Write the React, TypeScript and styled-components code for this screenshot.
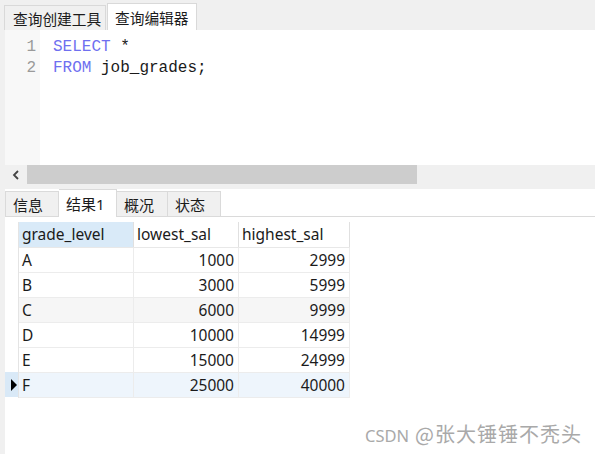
import styled, { createGlobalStyle } from 'styled-components'

const GlobalStyle = createGlobalStyle`
  html, body {
    margin: 0;
    padding: 0;
    background: #f0f0f0;
  }
  body {
    font-family: "Noto Sans", "Noto Sans CJK SC", sans-serif;
    color: #1b1b1b;
  }
`

const Page = styled.div`
  position: relative;
  width: 595px;
  height: 454px;
  overflow: hidden;
  background: #f0f0f0;
  display: flex;
  flex-direction: column;
`

const TopTabs = styled.div`
  height: 30px;
  display: flex;
  align-items: flex-end;
  padding-left: 4px;
  background: #f0f0f0;
`

const TopTab = styled.div<{ $active?: boolean; $w: number }>`
  width: ${p => p.$w}px;
  height: ${p => (p.$active ? 27 : 25)}px;
  box-sizing: border-box;
  padding-left: ${p => (p.$active ? 7 : 8)}px;
  display: flex;
  align-items: center;
  font-size: 14.7px;
  font-family: "Noto Sans CJK SC", sans-serif;
  white-space: nowrap;
  background: ${p => (p.$active ? '#ffffff' : '#f0f0f0')};
  border: 1px solid #d9d9d9;
  border-bottom: none;
  margin-left: ${p => (p.$active ? 1 : 0)}px;
`

const Body = styled.div`
  flex: 1;
  margin-left: 5px;
  background: #ffffff;
  display: flex;
  flex-direction: column;
`

const Editor = styled.div`
  height: 135px;
  display: flex;
  font-family: "Liberation Mono", monospace;
  font-size: 16px;
  line-height: 21px;
`

const Gutter = styled.div`
  width: 35px;
  box-sizing: border-box;
  padding: 7px 4px 0 0;
  background: #f8f8f8;
  color: #9a9a9a;
  text-align: right;
`

const Code = styled.div`
  padding: 7px 0 0 13px;
  color: #1a1a1a;
  white-space: pre;
`

const Keyword = styled.span`
  color: #6f6ff0;
`

const ScrollBar = styled.div`
  height: 24px;
  background: #f0f0f0;
  display: flex;
  align-items: flex-start;
`

const ArrowButton = styled.div`
  width: 22px;
  height: 19px;
  display: flex;
  align-items: center;
  justify-content: center;
`

const Thumb = styled.div`
  width: 390px;
  height: 19px;
  background: #cdcdcd;
`

const ResultTabs = styled.div`
  height: 27px;
  display: flex;
  align-items: flex-end;
  border-bottom: 1px solid #dadada;
`

const ResultTab = styled.div<{ $active?: boolean; $first?: boolean; $w: number }>`
  width: ${p => p.$w}px;
  height: ${p => (p.$active ? 28 : 25)}px;
  box-sizing: border-box;
  padding-left: 7px;
  display: flex;
  align-items: center;
  font-size: 15px;
  font-family: "Noto Sans", "Noto Sans CJK SC", sans-serif;
  background: ${p => (p.$active ? '#ffffff' : '#f0f0f0')};
  border: 1px solid #dadada;
  border-bottom: none;
  margin-bottom: ${p => (p.$active ? -1 : 0)}px;
  border-left: ${p => (p.$first ? '1px solid #dadada' : 'none')};
`

const GridWrap = styled.div`
  padding-top: 5px;
`

const Grid = styled.table`
  border-collapse: collapse;
  table-layout: fixed;
  font-size: 15.5px;
  font-family: "Noto Sans", "Noto Sans CJK SC", sans-serif;
`

const IndicatorCell = styled.td<{ $current?: boolean }>`
  width: 13px;
  padding: 0;
  height: 25px;
  background: ${p => (p.$current ? '#d9e9f7' : '#ffffff')};
  border-right: 1px solid #e4e4e4;
  position: relative;
`

const HeadCell = styled.th<{ $selected?: boolean; $w: number }>`
  width: ${p => p.$w}px;
  height: 25px;
  box-sizing: border-box;
  padding: 0 3px;
  text-align: left;
  font-weight: 400;
  background: ${p => (p.$selected ? '#d9eaf8' : '#ffffff')};
  border-right: 1px solid #e0e0e0;
  border-bottom: 1px solid #e8e8e8;
`

const Row = styled.tr<{ $tone: 'plain' | 'alt' | 'current' }>`
  background: ${p => (p.$tone === 'alt' ? '#f6f6f6' : p.$tone === 'current' ? '#eef5fc' : '#ffffff')};
`

const Cell = styled.td<{ $num?: boolean }>`
  height: 25px;
  box-sizing: border-box;
  padding: 0 ${p => (p.$num ? 4 : 3)}px 0 3px;
  text-align: ${p => (p.$num ? 'right' : 'left')};
  border-right: 1px solid #ececec;
  border-bottom: 1px solid #ececec;
  white-space: nowrap;
`

const Pointer = styled.span`
  position: absolute;
  left: 6px;
  top: 7px;
  width: 0;
  height: 0;
  border-top: 6px solid transparent;
  border-bottom: 6px solid transparent;
  border-left: 6px solid #000;
`

const Watermark = styled.div`
  position: absolute;
  right: 13px;
  bottom: 6px;
  color: #a9a9a9;
  display: flex;
  align-items: baseline;
  gap: 6px;
  font-family: "Noto Sans CJK SC", sans-serif;
`

const MarkLatin = styled.span`
  font-family: "Noto Sans", sans-serif;
  font-size: 16.5px;
`

const MarkName = styled.span`
  font-size: 20px;
  letter-spacing: 1px;
`

const rows = [
  { g: 'A', lo: 1000, hi: 2999 },
  { g: 'B', lo: 3000, hi: 5999 },
  { g: 'C', lo: 6000, hi: 9999 },
  { g: 'D', lo: 10000, hi: 14999 },
  { g: 'E', lo: 15000, hi: 24999 },
  { g: 'F', lo: 25000, hi: 40000 },
]

const App = () => {
  return (
    <Page>
      <GlobalStyle />
      <TopTabs>
        <TopTab $w={102}>查询创建工具</TopTab>
        <TopTab $w={90} $active>查询编辑器</TopTab>
      </TopTabs>
      <Body>
        <Editor>
          <Gutter>
            <div>1</div>
            <div>2</div>
          </Gutter>
          <Code>
            <div><Keyword>SELECT</Keyword> *</div>
            <div><Keyword>FROM</Keyword> job_grades;</div>
          </Code>
        </Editor>
        <ScrollBar>
          <ArrowButton>
            <svg width="8" height="10" viewBox="0 0 8 10">
              <path d="M6 1 L2 5 L6 9" fill="none" stroke="#444" strokeWidth="1.8" />
            </svg>
          </ArrowButton>
          <Thumb />
        </ScrollBar>
        <ResultTabs>
          <ResultTab $w={54} $first>信息</ResultTab>
          <ResultTab $w={58} $active>结果1</ResultTab>
          <ResultTab $w={51}>概况</ResultTab>
          <ResultTab $w={53}>状态</ResultTab>
        </ResultTabs>
        <GridWrap>
          <Grid>
            <thead>
              <tr>
                <IndicatorCell as="th" />
                <HeadCell $w={115} $selected>grade_level</HeadCell>
                <HeadCell $w={105}>lowest_sal</HeadCell>
                <HeadCell $w={111}>highest_sal</HeadCell>
              </tr>
            </thead>
            <tbody>
              {rows.map((r, i) => {
                const current = i === rows.length - 1
                const tone = current ? 'current' : i === 2 ? 'alt' : 'plain'
                return (
                  <Row key={r.g} $tone={tone}>
                    <IndicatorCell $current={current}>{current && <Pointer />}</IndicatorCell>
                    <Cell>{r.g}</Cell>
                    <Cell $num>{r.lo}</Cell>
                    <Cell $num>{r.hi}</Cell>
                  </Row>
                )
              })}
            </tbody>
          </Grid>
        </GridWrap>
      </Body>
      <Watermark>
        <MarkLatin>CSDN</MarkLatin>
        <MarkName>@张大锤锤不秃头</MarkName>
      </Watermark>
    </Page>
  )
}

export default App
